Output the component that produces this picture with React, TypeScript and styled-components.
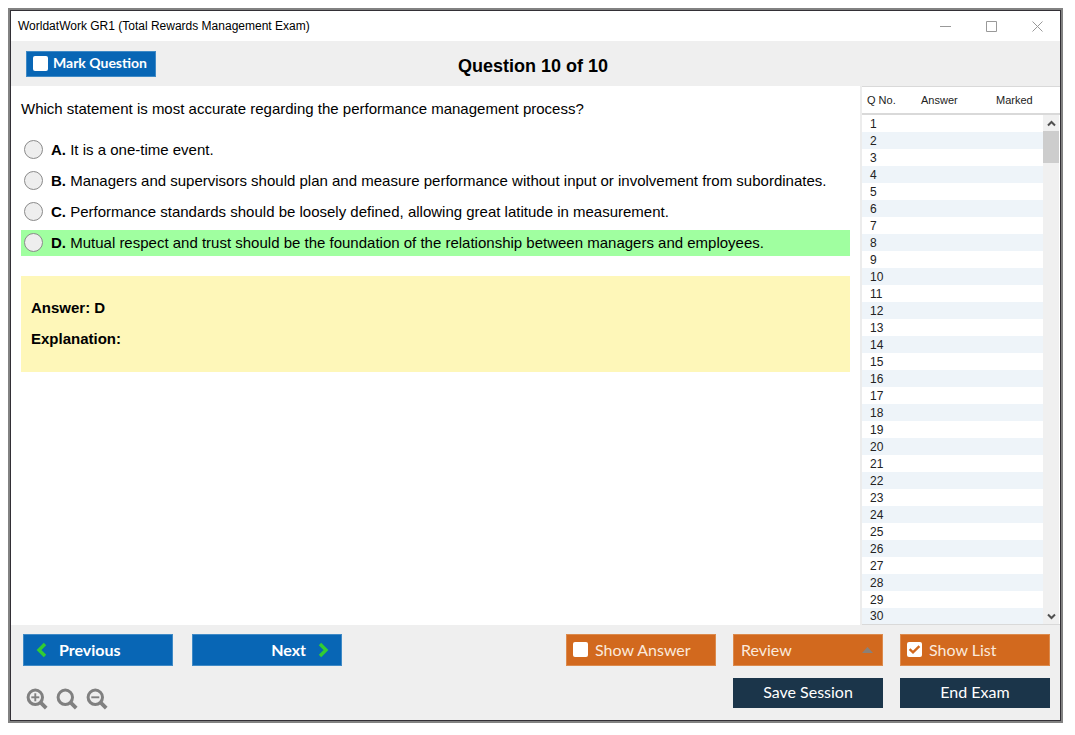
import React, { useState } from "react";
import styled, { createGlobalStyle } from "styled-components";

const GlobalStyle = createGlobalStyle`
  *, *::before, *::after { box-sizing: border-box; }
  body {
    margin: 8px 12px 12px 8px;
    background: #fff;
    color: #000;
    font-family: "Liberation Sans", Arial, sans-serif;
  }
  button, input { font: inherit; margin: 0; }
`;

const Frame = styled.div`
  border: 2px solid #828282;
`;

const Window = styled.div`
  display: flex;
  flex-direction: column;
  min-height: calc(100vh - 24px);
  border: 1px solid #333036;
  background: #fff;
`;

const TitleBar = styled.header`
  display: flex;
  align-items: center;
  justify-content: space-between;
  height: 30px;
  padding-left: 7px;
  font-size: 12px;
`;

const WindowControls = styled.div`
  display: flex;
`;

const ControlButton = styled.button`
  display: grid;
  place-items: center;
  width: 46px;
  height: 28px;
  padding: 0;
  border: 0;
  background: transparent;
  color: #999;
`;

const QuestionBar = styled.div`
  display: grid;
  grid-template-columns: 1fr auto 1fr;
  align-items: center;
  height: 45px;
  padding: 0 20px 0 15px;
  background: #efefef;
`;

const Heading = styled.h1`
  margin: 0;
  padding-top: 4px;
  font-size: 18px;
  line-height: 20px;
`;

const Toggle = styled.label<{ $tone: "blue" | "orange" }>`
  display: flex;
  align-items: center;
  gap: ${(p) => (p.$tone === "blue" ? 5 : 7)}px;
  width: ${(p) => (p.$tone === "blue" ? 130 : 150)}px;
  height: ${(p) => (p.$tone === "blue" ? 26 : 32)}px;
  padding: 0 6px 1px;
  border: 1px solid ${(p) => (p.$tone === "blue" ? "#3f8ac6" : "#dc8a4c")};
  background: ${(p) => (p.$tone === "blue" ? "#0866b5" : "#d2691e")};
  color: ${(p) => (p.$tone === "blue" ? "#fff" : "#fbe9dc")};
  font-family: Lato, Calibri, sans-serif;
  font-size: ${(p) => (p.$tone === "blue" ? 14 : 16)}px;
  font-weight: ${(p) => (p.$tone === "blue" ? 700 : 400)};
  line-height: 18px;
  white-space: nowrap;
`;

const TickBox = styled.span`
  display: grid;
  place-items: center;
  color: #d2691e;
  > * { grid-area: 1 / 1; }
  svg { pointer-events: none; }
`;

const TickInput = styled.input`
  appearance: none;
  width: 15px;
  height: 15px;
  border-radius: 2px;
  background: #fff;
`;

const Main = styled.main`
  display: flex;
  flex: 1;
`;

const QuestionPane = styled.section`
  flex: 1;
  min-width: 0;
  padding: 13px 10px;
  font-size: 15px;
  line-height: 20px;
`;

const QuestionText = styled.p`
  margin: 0 0 18px;
`;

const Options = styled.div`
  display: flex;
  flex-direction: column;
  gap: 5px;
`;

const Option = styled.label<{ $correct?: boolean }>`
  display: flex;
  align-items: center;
  gap: 8px;
  min-height: 26px;
  padding: 0 3px;
  background: ${(p) => (p.$correct ? "#a0ffa0" : "transparent")};
`;

const Radio = styled.input`
  appearance: none;
  flex: none;
  width: 19px;
  height: 19px;
  border: 1px solid #8a8a8a;
  border-radius: 50%;
  background: #eee;
  ${Option} & { margin-bottom: 1px; }
  &:checked { box-shadow: inset 0 0 0 4px #eee; background: #333; }
`;

const AnswerBox = styled.div`
  display: flex;
  flex-direction: column;
  gap: 11px;
  margin-top: 20px;
  padding: 22px 10px 23px;
  background: #fef7b9;
  font-weight: 700;
`;

const AnswerLine = styled.p`
  margin: 0;
`;

const ListPane = styled.aside`
  position: relative;
  width: 200px;
  border-left: 2px solid #ececec;
`;

const QuestionTable = styled.table`
  width: 100%;
  border-collapse: separate;
  border-spacing: 0;
  table-layout: fixed;
  color: #222;
  font-size: 12px;
  line-height: 16px;
`;

const HeadCell = styled.th<{ $width?: number }>`
  width: ${(p) => (p.$width ? `${p.$width}px` : "auto")};
  height: 29px;
  padding: 0 5px;
  border-top: 1px solid #d9d9d9;
  border-bottom: 2px solid #d9d9d9;
  font-size: 11px;
  font-weight: 400;
  text-align: left;
`;

const ListRow = styled.tr`
  &:nth-child(even) { background: #eef4f9; }
  &:last-child td { border-bottom: 1px solid #d9d9d9; }
`;

const ListCell = styled.td`
  height: 17px;
  padding: 0 8px;
`;

const ScrollBar = styled.div`
  position: absolute;
  top: 29px;
  right: 0;
  bottom: 1px;
  display: flex;
  flex-direction: column;
  width: 17px;
  border-right: 1px solid #fff;
  background: #f0f0f0;
`;

const ScrollButton = styled.button`
  display: grid;
  place-items: center;
  height: 16px;
  padding: 0;
  border: 0;
  background: transparent;
  color: #505050;
`;

const ScrollTrack = styled.div`
  flex: 1;
`;

const Thumb = styled.div`
  height: 32px;
  background: #cdcdcd;
`;

const Footer = styled.footer`
  display: flex;
  flex-direction: column;
  gap: 12px;
  padding: 9px 10px 10px 12px;
  background: #efefef;
`;

const FooterRow = styled.div`
  display: flex;
  align-items: flex-start;
  justify-content: space-between;
`;

const Group = styled.div<{ $gap: number }>`
  display: flex;
  align-items: center;
  gap: ${(p) => p.$gap}px;
`;

const NavButton = styled.button<{ $end?: boolean }>`
  display: flex;
  align-items: center;
  justify-content: ${(p) => (p.$end ? "flex-end" : "flex-start")};
  gap: 12px;
  width: 150px;
  height: 32px;
  padding: 0 12px;
  border: 1px solid #3f8ac6;
  background: #0866b5;
  color: #fff;
  font-family: Lato, Calibri, sans-serif;
  font-size: 16px;
  font-weight: 700;
  line-height: 18px;
`;

const ReviewButton = styled.button`
  display: flex;
  align-items: center;
  justify-content: space-between;
  width: 150px;
  height: 32px;
  padding: 0 9px 1px 7px;
  border: 1px solid #dc8a4c;
  background: #d2691e;
  color: #fbe9dc;
  font-family: Lato, Calibri, sans-serif;
  font-size: 16px;
  line-height: 18px;
`;

const SessionButton = styled.button`
  width: 150px;
  height: 30px;
  padding: 0 0 2px;
  border: 1px solid #1b354a;
  background: #1b354a;
  color: #fff;
  font-family: Lato, Calibri, sans-serif;
  font-size: 16px;
  line-height: 18px;
`;

const ZoomTools = styled.div`
  display: flex;
  align-items: center;
  gap: 8px;
  padding: 10px 0 0 3px;
`;

const ZoomButton = styled.button`
  display: block;
  width: 22px;
  height: 22px;
  padding: 0;
  border: 0;
  background: transparent;
  color: #808080;
  svg { display: block; }
`;

const options = [
  { key: "A", text: "It is a one-time event." },
  { key: "B", text: "Managers and supervisors should plan and measure performance without input or involvement from subordinates." },
  { key: "C", text: "Performance standards should be loosely defined, allowing great latitude in measurement." },
  { key: "D", text: "Mutual respect and trust should be the foundation of the relationship between managers and employees." },
];

const rows = Array.from({ length: 30 }, (_, i) => i + 1);

function ToggleButton({ label, tone, initial = false }: { label: string; tone: "blue" | "orange"; initial?: boolean }) {
  const [on, setOn] = useState(initial);
  return (
    <Toggle $tone={tone}>
      <TickBox>
        <TickInput type="checkbox" checked={on} onChange={() => setOn(!on)} />
        {on && (
          <svg width="15" height="15" viewBox="0 0 15 15" fill="none" stroke="currentColor" strokeWidth="2.4">
            <path d="M2.6 7.2 6 10.4 12.4 4.2" />
          </svg>
        )}
      </TickBox>
      {label}
    </Toggle>
  );
}

function ZoomIcon({ sign }: { sign?: "plus" | "minus" }) {
  return (
    <svg width="22" height="22" viewBox="0 0 22 22" fill="none" stroke="currentColor">
      <circle cx="9.3" cy="9.3" r="7.2" strokeWidth="3" />
      <path d="M14.2 14.2 20.2 20.2" strokeWidth="3.8" />
      {sign && <path d="M5.3 9.3h8" strokeWidth="1.9" />}
      {sign === "plus" && <path d="M9.3 5.3v8" strokeWidth="1.9" />}
    </svg>
  );
}

export default function App() {
  const [choice, setChoice] = useState("");
  return (
    <>
      <GlobalStyle />
      <Frame>
        <Window>
          <TitleBar>
            <span>WorldatWork GR1 (Total Rewards Management Exam)</span>
            <WindowControls>
              <ControlButton aria-label="Minimize">
                <svg width="11" height="11" stroke="currentColor"><path d="M0 5.5h11" /></svg>
              </ControlButton>
              <ControlButton aria-label="Maximize">
                <svg width="11" height="11" fill="none" stroke="currentColor"><path d="M.5.5h10v10H.5z" /></svg>
              </ControlButton>
              <ControlButton aria-label="Close">
                <svg width="11" height="11" stroke="currentColor"><path d="M.5.5l10 10M10.5.5l-10 10" /></svg>
              </ControlButton>
            </WindowControls>
          </TitleBar>

          <QuestionBar>
            <ToggleButton label="Mark Question" tone="blue" />
            <Heading>Question 10 of 10</Heading>
          </QuestionBar>

          <Main>
            <QuestionPane>
              <QuestionText>Which statement is most accurate regarding the performance management process?</QuestionText>
              <Options role="radiogroup" aria-label="Choices">
                {options.map((o) => (
                  <Option key={o.key} $correct={o.key === "D"}>
                    <Radio type="radio" name="choice" checked={choice === o.key} onChange={() => setChoice(o.key)} />
                    <span><b>{o.key}.</b> {o.text}</span>
                  </Option>
                ))}
              </Options>
              <AnswerBox>
                <AnswerLine>Answer: D</AnswerLine>
                <AnswerLine>Explanation:</AnswerLine>
              </AnswerBox>
            </QuestionPane>

            <ListPane>
              <QuestionTable>
                <thead>
                  <tr>
                    <HeadCell $width={54}>Q No.</HeadCell>
                    <HeadCell $width={75}>Answer</HeadCell>
                    <HeadCell>Marked</HeadCell>
                  </tr>
                </thead>
                <tbody>
                  {rows.map((n) => (
                    <ListRow key={n}>
                      <ListCell>{n}</ListCell>
                      <ListCell />
                      <ListCell />
                    </ListRow>
                  ))}
                </tbody>
              </QuestionTable>
              <ScrollBar>
                <ScrollButton aria-label="Scroll up">
                  <svg width="9" height="7" fill="none" stroke="currentColor" strokeWidth="2"><path d="M1 5.5 4.5 2 8 5.5" /></svg>
                </ScrollButton>
                <ScrollTrack><Thumb /></ScrollTrack>
                <ScrollButton aria-label="Scroll down">
                  <svg width="9" height="7" fill="none" stroke="currentColor" strokeWidth="2"><path d="M1 1.5 4.5 5 8 1.5" /></svg>
                </ScrollButton>
              </ScrollBar>
            </ListPane>
          </Main>

          <Footer>
            <FooterRow>
              <Group $gap={19}>
                <NavButton>
                  <svg width="11" height="16" fill="none" stroke="#32cd32" strokeWidth="3.4"><path d="M9 2 3 8l6 6" /></svg>
                  Previous
                </NavButton>
                <NavButton $end>
                  Next
                  <svg width="11" height="16" fill="none" stroke="#32cd32" strokeWidth="3.4"><path d="M2 2l6 6-6 6" /></svg>
                </NavButton>
              </Group>
              <Group $gap={17}>
                <ToggleButton label="Show Answer" tone="orange" />
                <ReviewButton aria-haspopup="menu">
                  Review
                  <svg width="11" height="6" fill="#8a8078"><path d="M0 6 5.5 0 11 6z" /></svg>
                </ReviewButton>
                <ToggleButton label="Show List" tone="orange" initial />
              </Group>
            </FooterRow>
            <FooterRow>
              <ZoomTools>
                <ZoomButton aria-label="Zoom in"><ZoomIcon sign="plus" /></ZoomButton>
                <ZoomButton aria-label="Reset zoom"><ZoomIcon /></ZoomButton>
                <ZoomButton aria-label="Zoom out"><ZoomIcon sign="minus" /></ZoomButton>
              </ZoomTools>
              <Group $gap={17}>
                <SessionButton>Save Session</SessionButton>
                <SessionButton>End Exam</SessionButton>
              </Group>
            </FooterRow>
          </Footer>
        </Window>
      </Frame>
    </>
  );
}
